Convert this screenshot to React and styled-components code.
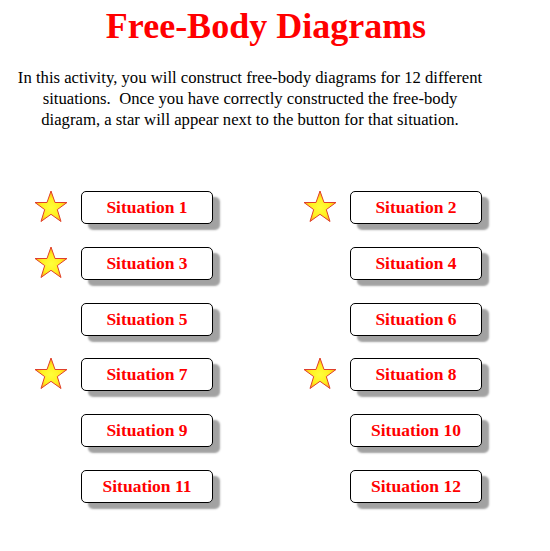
import React from "react";
import styled, { createGlobalStyle } from "styled-components";

const GlobalStyle = createGlobalStyle`
  body {
    margin: 0;
    background: #fff;
    font-family: "Liberation Serif", "Times New Roman", serif;
  }
`;

const Page = styled.div`
  width: 550px;
  height: 551px;
  overflow: hidden;
`;

const Title = styled.h1`
  margin: 0;
  padding: 4px 18px 0 0;
  text-align: center;
  color: #ff0000;
  font-size: 36px;
  font-weight: bold;
  line-height: 44px;
`;

const Intro = styled.p`
  margin: 19px 0 0 14px;
  width: 472px;
  text-align: center;
  color: #000;
  font-size: 16.7px;
  line-height: 21px;
  white-space: pre-wrap;
`;

const Grid = styled.div`
  display: grid;
  grid-template-columns: 269px 269px;
  grid-auto-rows: 55.8px;
  padding-left: 34px;
  margin-top: 61px;
`;

const Cell = styled.div`
  display: flex;
  align-items: flex-start;
`;

const StarSlot = styled.div`
  width: 34px;
  height: 33px;
  margin-right: 13px;
  margin-top: -1px;
`;

const Button = styled.button`
  width: 132px;
  height: 33px;
  padding: 0;
  border: 1px solid #000;
  border-radius: 5px;
  background: #fff;
  box-shadow: 7px 6px 2px #a2a2a2;
  color: #ff0000;
  font-family: "Liberation Serif", "Times New Roman", serif;
  font-size: 17.5px;
  font-weight: bold;
  cursor: pointer;
`;

const Star = () => (
  <svg width="34" height="33" viewBox="0 0 34 33">
    <defs>
      <radialGradient id="starFill" cx="50%" cy="55%" r="55%">
        <stop offset="0%" stopColor="#ffff3a" />
        <stop offset="55%" stopColor="#fff020" />
        <stop offset="100%" stopColor="#ffa010" />
      </radialGradient>
    </defs>
    <polygon
      points="17,1 21,12.5 33,12.5 23.3,19.6 27,31.5 17,24.3 7,31.5 10.7,19.6 1,12.5 13,12.5"
      fill="url(#starFill)"
      stroke="#e0402a"
      strokeWidth="1"
      strokeLinejoin="round"
    />
  </svg>
);

const situations = [
  { n: 1, done: true },
  { n: 2, done: true },
  { n: 3, done: true },
  { n: 4, done: false },
  { n: 5, done: false },
  { n: 6, done: false },
  { n: 7, done: true },
  { n: 8, done: true },
  { n: 9, done: false },
  { n: 10, done: false },
  { n: 11, done: false },
  { n: 12, done: false },
];

export default function App() {
  return (
    <Page>
      <GlobalStyle />
      <Title>Free-Body Diagrams</Title>
      <Intro>
        {"In this activity, you will construct free-body diagrams for 12 different situations.  Once you have correctly constructed the free-body diagram, a star will appear next to the button for that situation."}
      </Intro>
      <Grid>
        {situations.map((s) => (
          <Cell key={s.n}>
            <StarSlot>{s.done && <Star />}</StarSlot>
            <Button>Situation {s.n}</Button>
          </Cell>
        ))}
      </Grid>
    </Page>
  );
}
